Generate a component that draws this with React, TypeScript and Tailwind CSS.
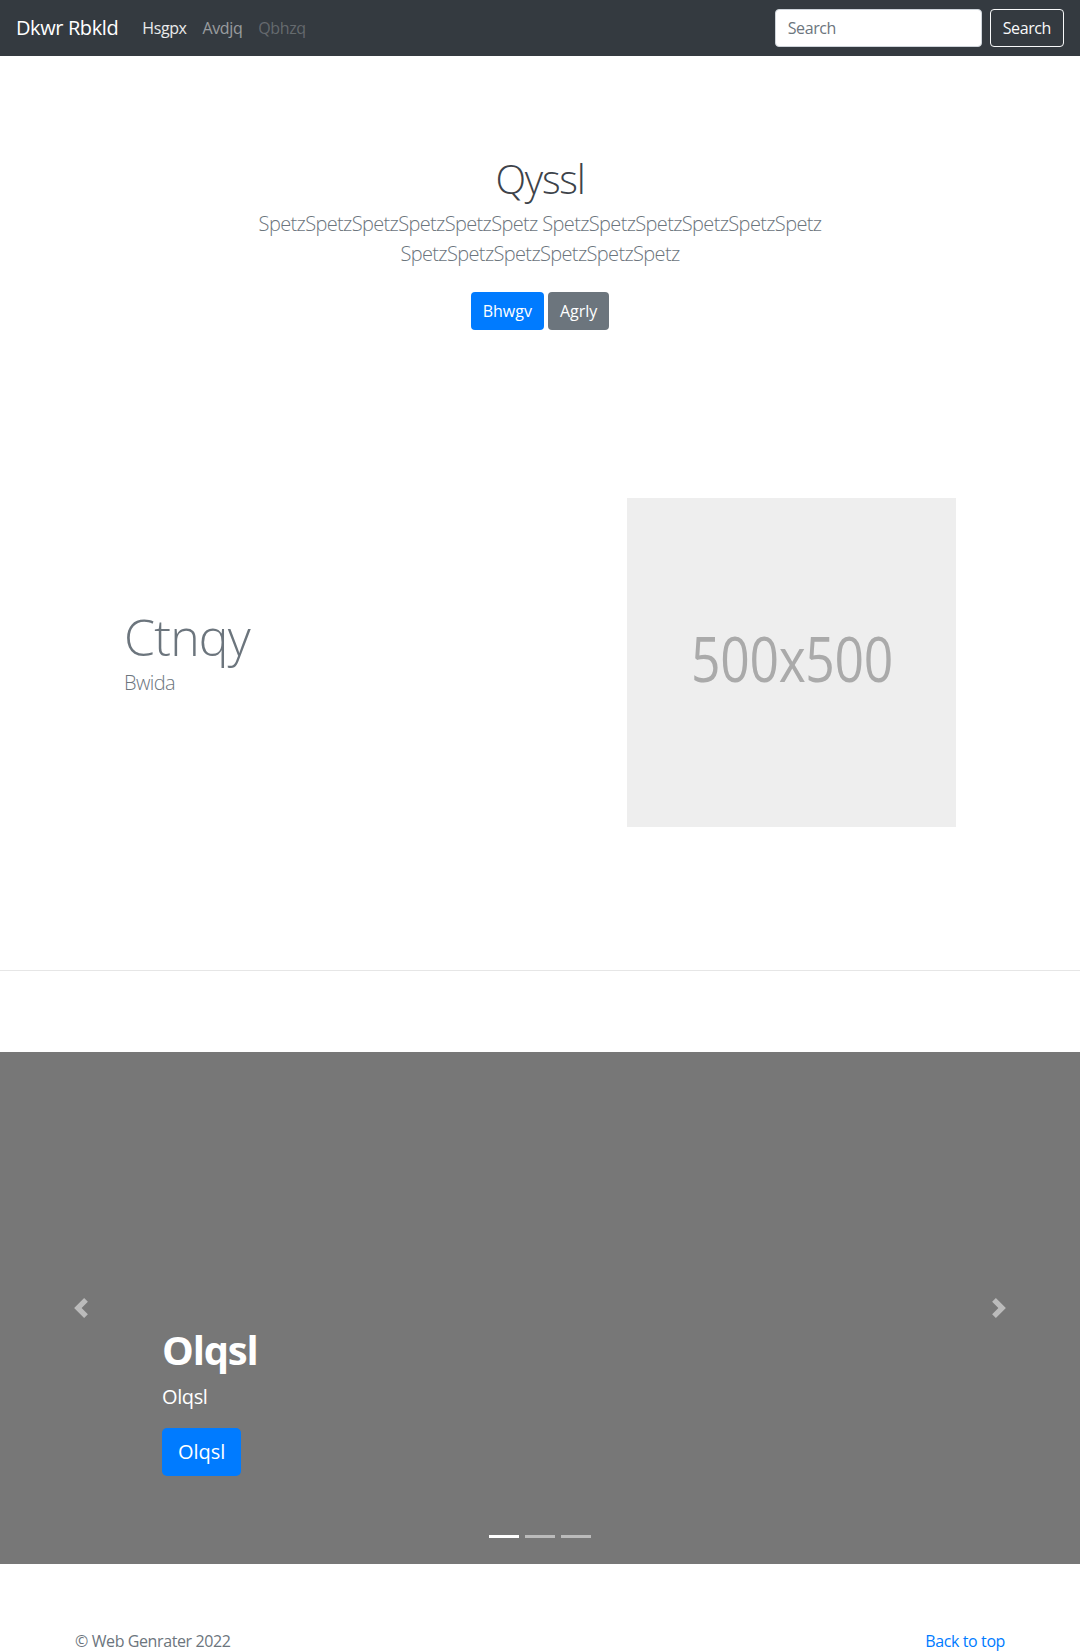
import React from 'react';

const navLinks = [
    { label: 'Hsgpx', className: 'text-white/90' },
    { label: 'Avdjq', className: 'text-white/50' },
    { label: 'Qbhzq', className: 'text-white/25' },
];

function Navbar() {
    return (
        <nav className="flex h-14 items-center bg-[#343a40] px-4">
            <span className="mr-4 text-[20px] leading-[30px] text-white">
                Dkwr Rbkld
            </span>
            <div className="flex">
                {navLinks.map((link) => (
                    <span
                        key={link.label}
                        className={`px-2 text-[16px] leading-6 ${link.className}`}
                    >
                        {link.label}
                    </span>
                ))}
            </div>
            <div className="ml-auto flex items-center gap-2">
                <input
                    placeholder="Search"
                    className="h-[38px] w-[207px] rounded-[4px] border border-[#ced4da] bg-white px-3 text-[16px] text-[#495057] outline-none placeholder:text-[#6c757d]"
                />
                <button className="h-[38px] rounded-[4px] border border-[#f8f9fa] px-3 text-[16px] text-[#f8f9fa]">
                    Search
                </button>
            </div>
        </nav>
    );
}

function Hero() {
    const word = 'SpetzSpetzSpetzSpetzSpetzSpetz';
    return (
        <section className="pt-[99px] text-center">
            <h1 className="text-[40px] font-light leading-[48px] tracking-[-0.03em] text-[#3d434a]">
                Qyssl
            </h1>
            <p className="mx-auto mt-[6px] max-w-[610px] text-[20px] font-light leading-[30px] tracking-[-0.032em] text-[#6c757d]">
                {word} {word} {word}
            </p>
            <div className="mt-[23px] flex justify-center gap-1 tracking-normal">
                <button className="h-[38px] rounded-[4px] bg-[#007bff] px-3 text-[16px] text-white">
                    Bhwgv
                </button>
                <button className="h-[38px] rounded-[4px] bg-[#6c757d] px-3 text-[16px] text-white">
                    Agrly
                </button>
            </div>
        </section>
    );
}

function Featurette() {
    return (
        <section className="flex items-center justify-between px-[124px] pb-[143px] pt-[168px]">
            <div>
                <h2 className="mb-[6px] text-[50px] font-light leading-none tracking-[-0.8px] text-[#6c757d]">
                    Ctnqy
                </h2>
                <p className="mb-4 text-[20px] font-light leading-[30px] tracking-[-0.03em] text-[#6c757d]">
                    Bwida
                </p>
            </div>
            <svg width="329" height="329" viewBox="0 0 329 329">
                <rect width="329" height="329" fill="#eeeeee" />
                <text
                    x="64"
                    y="167"
                    fill="#aaaaaa"
                    fontSize="62"
                    textLength="202"
                    lengthAdjust="spacingAndGlyphs"
                    dominantBaseline="middle"
                >
                    500x500
                </text>
            </svg>
        </section>
    );
}

function Chevron({ dir }: { dir: 'left' | 'right' }) {
    return (
        <svg width="20" height="20" viewBox="0 0 8 8" fill="#fff">
            <path
                d={
                    dir === 'left'
                        ? 'M5.25 0l-4 4 4 4 1.5-1.5L4.25 4l2.5-2.5L5.25 0z'
                        : 'M2.75 0l-1.5 1.5L3.75 4l-2.5 2.5L2.75 8l4-4-4-4z'
                }
            />
        </svg>
    );
}

function Carousel() {
    return (
        <section className="relative flex h-[512px] flex-col justify-end bg-[#777777] pb-[88px] pl-[162px]">
            <h1 className="text-[40px] font-bold leading-[48px] tracking-[-0.03em] text-white">
                Olqsl
            </h1>
            <p className="mt-2 text-[20px] leading-[30px] text-white">Olqsl</p>
            <div className="mt-4">
                <button className="h-12 rounded-[5px] bg-[#007bff] px-4 text-[20px] tracking-normal text-white">
                    Olqsl
                </button>
            </div>

            <div className="absolute left-0 top-0 flex h-full w-[15%] items-center justify-center opacity-50">
                <Chevron dir="left" />
            </div>
            <div className="absolute right-0 top-0 flex h-full w-[15%] items-center justify-center opacity-50">
                <Chevron dir="right" />
            </div>

            <div className="absolute bottom-[26px] left-0 flex w-full justify-center gap-[6px]">
                <span className="h-[3px] w-[30px] bg-white" />
                <span className="h-[3px] w-[30px] bg-white/50" />
                <span className="h-[3px] w-[30px] bg-white/50" />
            </div>
        </section>
    );
}

export default function App() {
    return (
        <div className="min-h-[1652px] bg-white font-['Open_Sans',sans-serif] tracking-[-0.025em]">
            <Navbar />
            <Hero />
            <Featurette />
            <hr className="border-0 border-t border-[#e6e6e6]" />
            <div className="h-[81px]" />
            <Carousel />
            <footer className="mx-auto flex w-[930px] justify-between pt-[65px] text-[16px] leading-6">
                <span className="text-[#6c757d]">© Web Genrater 2022</span>
                <span className="text-[#007bff]">Back to top</span>
            </footer>
        </div>
    );
}
